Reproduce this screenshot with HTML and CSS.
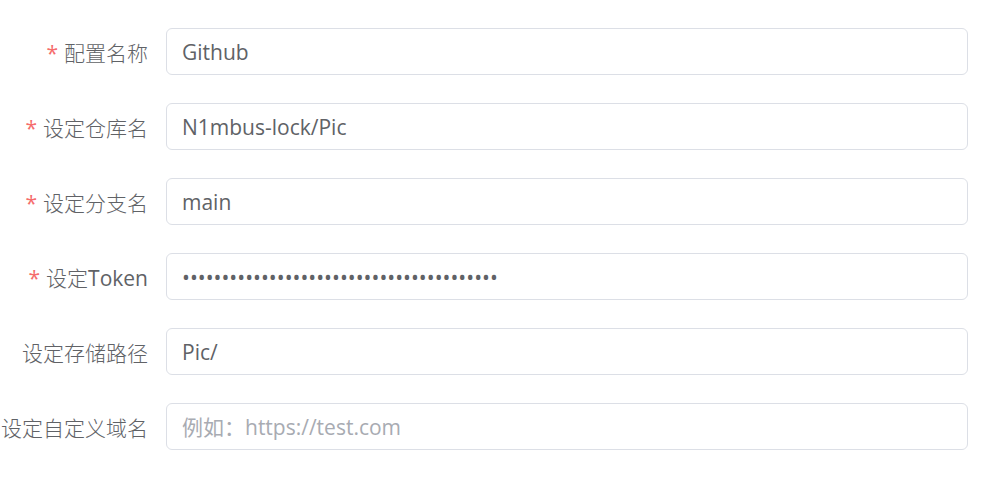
FILE: index.html
```html
<!DOCTYPE html>
<html>
<head>
<meta charset="utf-8">
<link rel="stylesheet" href="styles.css">
</head>
<body>
<form class="form">
  <div class="item">
    <label class="label required">配置名称</label>
    <div class="control"><input class="input" type="text" value="Github"></div>
  </div>
  <div class="item">
    <label class="label required">设定仓库名</label>
    <div class="control"><input class="input" type="text" value="N1mbus-lock/Pic"></div>
  </div>
  <div class="item">
    <label class="label required">设定分支名</label>
    <div class="control"><input class="input" type="text" value="main"></div>
  </div>
  <div class="item">
    <label class="label required">设定<span class="latin">Token</span></label>
    <div class="control"><input class="input" type="password" value="ghp_abcdefghijklmnopqrstuvwxyz0123456789"></div>
  </div>
  <div class="item">
    <label class="label">设定存储路径</label>
    <div class="control"><input class="input" type="text" value="Pic/"></div>
  </div>
  <div class="item">
    <label class="label">设定自定义域名</label>
    <div class="control"><input class="input" type="text" placeholder="例如：https://test.com"></div>
  </div>
</form>
</body>
</html>
```

FILE: styles.css
```css
html, body {
  margin: 0;
  padding: 0;
  background: #ffffff;
}
body {
  font-family: "Open Sans", "Noto Sans CJK SC", sans-serif;
  color: #606266;
}
.form {
  display: flex;
  flex-direction: column;
  gap: 28px;
  padding: 28px 21px 0 0;
}
.item {
  display: flex;
  align-items: center;
  height: 47px;
}
.label {
  flex: 0 0 166px;
  box-sizing: border-box;
  text-align: right;
  padding-right: 18px;
  font-size: 21px;
  font-weight: 300;
  color: #606266;
  white-space: nowrap;
}
.label .latin {
  font-weight: 400;
}
.label.required::before {
  content: "*";
  color: #f56c6c;
  font-weight: 400;
  margin-right: 6px;
}
.control {
  flex: 1;
  min-width: 0;
}
.input {
  display: block;
  width: 100%;
  box-sizing: border-box;
  height: 47px;
  border: 1px solid #dcdfe6;
  border-radius: 6px;
  padding: 0 15px;
  font-family: "Open Sans", "Noto Sans CJK SC", sans-serif;
  font-size: 21px;
  color: #606266;
  outline: none;
  background: #fff;
}
.input::placeholder {
  color: #a8abb2;
}
```
